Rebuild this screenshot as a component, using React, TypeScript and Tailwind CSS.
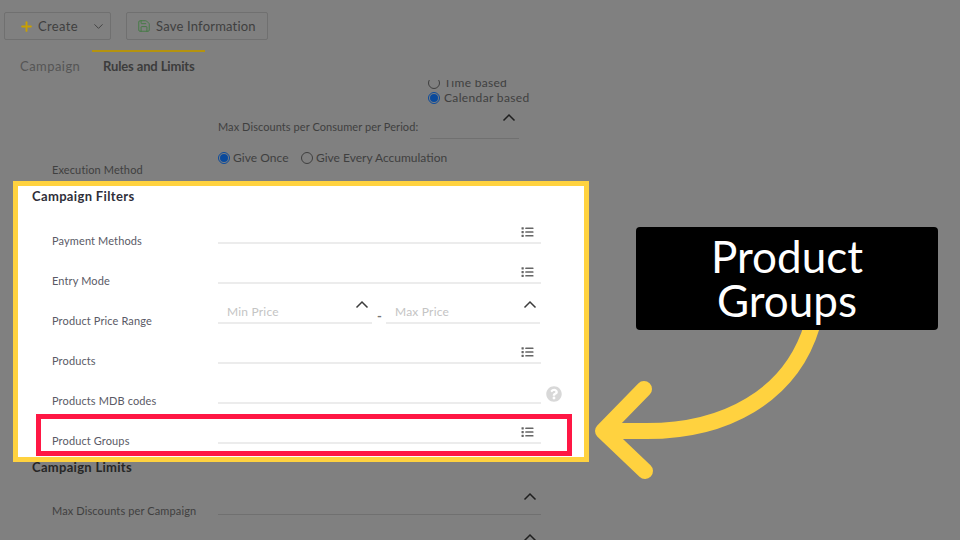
import { Plus, ChevronDown, Save } from "lucide-react";
import { FaList, FaQuestionCircle } from "react-icons/fa";

function Chevron({ dark }: { dark?: boolean }) {
  return (
    <svg width="14" height="9" viewBox="0 0 14 9" fill="none" stroke={dark ? "#1f1f1f" : "#3c3c3c"} strokeWidth="1.5">
      <path d="M1.5 7.5 7 2l5.5 5.5" />
    </svg>
  );
}

function Radio({ on }: { on?: boolean }) {
  return (
    <span className={`flex h-[12px] w-[12px] shrink-0 items-center justify-center rounded-full border ${on ? "border-[#0a4a9c]" : "border-[#3f3f3f]"}`}>
      {on && <span className="h-[8px] w-[8px] rounded-full bg-[#0a4a9c]" />}
    </span>
  );
}

function FilterRow({ label, icon, help }: { label: string; icon?: boolean; help?: boolean }) {
  return (
    <div className="relative flex h-10 items-end pl-[34px]">
      <span className="mb-[-4px] w-[166px] text-[11px] leading-[14px] tracking-[0.12px] text-[#5a5a66]">{label}</span>
      <div className="flex h-[22px] w-[323px] items-start justify-end border-b-2 border-[#ececec] pr-[7px]">
        {icon && <FaList className="mt-[4px] h-[12px] w-[13px] text-[#666666]" />}
      </div>
      {help && <FaQuestionCircle className="mb-[2px] ml-[5px] h-[16px] w-[16px] text-[#d8d8d8]" />}
    </div>
  );
}

function PriceField({ text, w }: { text: string; w: string }) {
  return (
    <div className={`flex h-[24px] ${w} items-start justify-between border-b-2 border-[#ececec] pl-[9px] pr-[3px]`}>
      <span className="pt-[5px] text-[12px] leading-[14px] tracking-[0.2px] text-[#c4c4c4]">{text}</span>
      <Chevron />
    </div>
  );
}

export default function App() {
  return (
    <div className="relative h-[540px] w-[960px] overflow-hidden bg-[#808080] font-['Lato','Noto_Sans',sans-serif]">
      <div className="flex gap-[15px] pl-1 pt-3">
        <div className="flex h-[28px] w-[107px] items-center rounded-[2px] border border-[#707070] pl-[14px] text-[13px] text-[#3f3f3f]">
          <Plus className="h-[15px] w-[15px] text-[#c9a000]" strokeWidth={3} />
          <span className="ml-[4px] mt-[1px] tracking-[0.35px]">Create</span>
          <ChevronDown className="ml-[13px] h-[15px] w-[15px] text-[#3f3f3f]" strokeWidth={1.5} />
        </div>
        <div className="flex h-[28px] w-[142px] items-center rounded-[2px] border border-[#707070] pl-[10px] text-[13px] text-[#3f3f3f]">
          <Save className="h-[14px] w-[14px] text-[#3f7a3f]" strokeWidth={1.5} />
          <span className="ml-[5px] mt-[1px] tracking-[0.2px]">Save Information</span>
        </div>
      </div>

      <div className="mt-[10px] flex h-[30px]">
        <span className="w-[92px] pl-5 pt-[8px] text-[13px] leading-[16px] tracking-[0.45px] text-[#555555]">Campaign</span>
        <span className="w-[113px] border-t-2 border-[#b5930f] pl-[11px] pt-[6px] text-[13px] font-bold leading-[16px] tracking-[-0.13px] text-[#3c3c3c]">Rules and Limits</span>
      </div>

      <div className="h-[101px] overflow-hidden text-[12px] text-[#3f3f3f]">
        <div className="ml-[428px] mt-[-4px] flex items-center gap-[4px] leading-[13px]">
          <Radio />
          <span className="tracking-[0.3px]">Time based</span>
        </div>
        <div className="ml-[428px] mt-[2px] flex items-center gap-[4px] leading-[14px]">
          <Radio on />
          <span className="tracking-[0.35px]">Calendar based</span>
        </div>
        <div className="ml-[218px] mt-[7px] flex h-[27px] items-center">
          <span className="w-[212px] pt-[4px] text-[11px] tracking-[0.07px]">Max Discounts per Consumer per Period:</span>
          <div className="flex h-[27px] w-[89px] justify-end border-b border-[#707070] pr-[3px] pt-[1px]">
            <Chevron dark />
          </div>
        </div>
        <div className="ml-[218px] mt-[10px] flex h-[18px] items-center">
          <Radio on />
          <span className="ml-[3px] w-[68px] tracking-[0.05px]">Give Once</span>
          <Radio />
          <span className="ml-[3px]">Give Every Accumulation</span>
        </div>
        <div className="mt-[-2px] pl-[52px] text-[11px] leading-[10px] tracking-[0.12px]">Execution Method</div>
      </div>

      <div className="relative ml-[13px] h-[281px] w-[576px] border-[5px] border-[#ffd23f] bg-white">
        <div className="h-[18px] pl-[14px] pt-[3px] text-[13px] font-bold leading-[14px] tracking-[0.35px] text-[#2f2f3a]">Campaign Filters</div>
        <FilterRow label="Payment Methods" icon />
        <FilterRow label="Entry Mode" icon />
        <div className="relative flex h-10 items-end pl-[34px]">
          <span className="mb-[-4px] w-[166px] text-[11px] leading-[14px] tracking-[0.12px] text-[#5a5a66]">Product Price Range</span>
          <PriceField text="Min Price" w="w-[154px]" />
          <span className="mx-[5px] mb-[1px] w-[4px] text-[13px] font-bold leading-[14px] text-[#777777]">-</span>
          <PriceField text="Max Price" w="w-[154px]" />
        </div>
        <FilterRow label="Products" icon />
        <FilterRow label="Products MDB codes" help />
        <FilterRow label="Product Groups" icon />
        <div className="absolute left-[18px] top-[228px] h-[42px] w-[536px] border-[5px] border-[#ff1744]" />
      </div>

      <div className="mt-[-2px] pl-8 text-[13px] font-bold leading-[14px] tracking-[0.3px] text-[#262626]">Campaign Limits</div>
      <div className="mt-[12px] flex h-[29px] items-end pl-[52px]">
        <span className="mb-[-3px] w-[166px] text-[11px] leading-[14px] tracking-[0.12px] text-[#3f3f3f]">Max Discounts per Campaign</span>
        <div className="flex h-[29px] w-[323px] justify-end border-b border-[#707070] pr-[4px] pt-[6px]">
          <Chevron dark />
        </div>
      </div>
      <div className="mt-[18px] flex w-[541px] justify-end pr-[4px]">
        <Chevron dark />
      </div>

      <svg className="absolute left-0 top-0" width="960" height="540" viewBox="0 0 960 540" fill="none" stroke="#ffd23f" strokeLinecap="round" strokeLinejoin="round">
        <path d="M812 326C791 395 726 433 640 431L606 431" strokeWidth="16" strokeLinecap="butt" />
        <path d="M644 389 603 431 645 471" strokeWidth="16" />
      </svg>

      <div className="absolute left-[636px] top-[227px] flex h-[103px] w-[302px] items-center justify-center rounded-[4px] bg-black pb-[1px] text-center text-[44px] leading-[44px] text-white">
        <span className="font-normal">Product<br />Groups</span>
      </div>
    </div>
  );
}
